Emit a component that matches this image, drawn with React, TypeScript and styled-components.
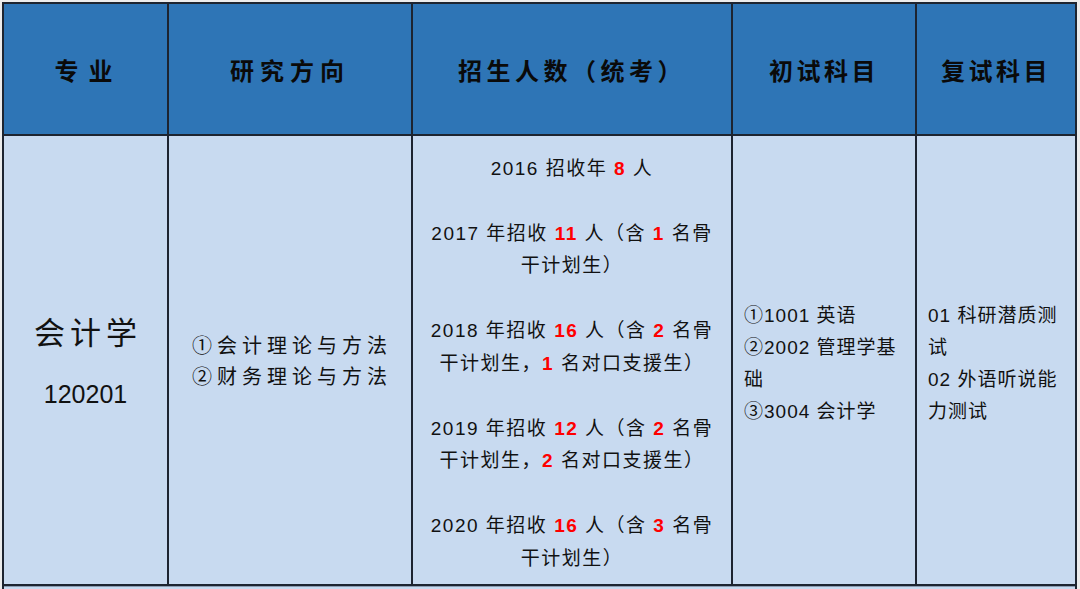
import React from "react";
import styled, { createGlobalStyle } from "styled-components";

const GlobalStyle = createGlobalStyle`
  html, body {
    margin: 0;
    padding: 0;
    background: #ececec;
  }
  body {
    font-family: "Liberation Sans", "Noto Sans CJK SC", sans-serif;
    color: #111;
  }
`;

const Page = styled.div`
  width: 1080px;
  height: 589px;
  overflow: hidden;
  padding: 2px 0 0 2px;
  box-sizing: border-box;
`;

const Sheet = styled.div`
  display: grid;
  grid-template-columns: 163px 242px 318px 182px 158px;
  grid-template-rows: 130px 448px 40px;
  gap: 2px;
  padding: 2px;
  width: max-content;
  background: #1d2430;
`;

const HeadCell = styled.div<{ $spacing?: number; $shift?: number }>`
  background: #2e75b6;
  display: flex;
  align-items: center;
  justify-content: center;
  padding-left: ${(p) => p.$shift ?? 0}px;
  font-family: "Noto Sans CJK SC", sans-serif;
  font-weight: 700;
  font-size: 24px;
  letter-spacing: ${(p) => p.$spacing ?? 3}px;
  color: #0a0a0a;
  white-space: nowrap;
`;

const Cell = styled.div<{ $align?: "center" | "left" }>`
  background: #c8daf0;
  display: flex;
  flex-direction: column;
  justify-content: center;
  align-items: ${(p) => (p.$align === "left" ? "flex-start" : "center")};
  padding: ${(p) => (p.$align === "left" ? "0 0 0 11px" : "0")};
  box-sizing: border-box;
`;

const MajorName = styled.div`
  font-family: "Noto Sans CJK SC", sans-serif;
  font-size: 31px;
  line-height: 40px;
  letter-spacing: 5px;
  padding-left: 5px;
`;

const MajorCode = styled.div`
  font-family: "Liberation Sans", sans-serif;
  font-size: 25px;
  line-height: 30px;
  margin-top: 28px;
`;

const Directions = styled.div`
  font-size: 20px;
  line-height: 31px;
  letter-spacing: 5px;
  white-space: nowrap;
  margin-top: 4px;
  padding-left: 4px;
`;

const QuotaList = styled.div`
  display: flex;
  flex-direction: column;
  align-items: center;
  gap: 32.5px;
  font-size: 19px;
  line-height: 32.5px;
  letter-spacing: 1.5px;
  margin-top: 8px;
`;

const Quota = styled.div`
  display: flex;
  flex-direction: column;
  align-items: center;
`;

const QLine = styled.div`
  white-space: pre;
`;

const Num = styled.span`
  color: #ff0000;
  font-weight: 700;
`;

const SubjectList = styled.div`
  font-size: 19px;
  line-height: 32px;
  letter-spacing: 1px;
  margin-top: 8px;
`;

const SubjectLine = styled.div`
  white-space: pre;
`;

const FootRow = styled.div`
  grid-column: 1 / -1;
  background: #c8daf0;
  box-shadow: inset 0 1px 0 #8a9bb0;
`;

type Seg = string | { n: string };

const quotas: Seg[][][] = [
  [["2016 招收年 ", { n: "8" }, " 人"]],
  [["2017 年招收 ", { n: "11" }, " 人（含 ", { n: "1" }, " 名骨"], ["干计划生）"]],
  [
    ["2018 年招收 ", { n: "16" }, " 人（含 ", { n: "2" }, " 名骨"],
    ["干计划生，", { n: "1" }, " 名对口支援生）"],
  ],
  [
    ["2019 年招收 ", { n: "12" }, " 人（含 ", { n: "2" }, " 名骨"],
    ["干计划生，", { n: "2" }, " 名对口支援生）"],
  ],
  [["2020 年招收 ", { n: "16" }, " 人（含 ", { n: "3" }, " 名骨"], ["干计划生）"]],
];

const firstExam = ["①1001 英语", "②2002 管理学基", "础", "③3004 会计学"];
const retest = ["01 科研潜质测", "试", "02 外语听说能", "力测试"];

export default function App() {
  return (
    <Page>
      <GlobalStyle />
      <Sheet>
        <HeadCell $spacing={10} $shift={6}>专业</HeadCell>
        <HeadCell $spacing={6}>研究方向</HeadCell>
        <HeadCell $spacing={4.5}>招生人数（统考）</HeadCell>
        <HeadCell $spacing={3.5}>初试科目</HeadCell>
        <HeadCell $spacing={3.5}>复试科目</HeadCell>

        <Cell>
          <MajorName>会计学</MajorName>
          <MajorCode>120201</MajorCode>
        </Cell>
        <Cell>
          <Directions>
            <div>①会计理论与方法</div>
            <div>②财务理论与方法</div>
          </Directions>
        </Cell>
        <Cell>
          <QuotaList>
            {quotas.map((q, i) => (
              <Quota key={i}>
                {q.map((line, j) => (
                  <QLine key={j}>
                    {line.map((s, k) =>
                      typeof s === "string" ? (
                        <React.Fragment key={k}>{s}</React.Fragment>
                      ) : (
                        <Num key={k}>{s.n}</Num>
                      )
                    )}
                  </QLine>
                ))}
              </Quota>
            ))}
          </QuotaList>
        </Cell>
        <Cell $align="left">
          <SubjectList>
            {firstExam.map((t) => (
              <SubjectLine key={t}>{t}</SubjectLine>
            ))}
          </SubjectList>
        </Cell>
        <Cell $align="left">
          <SubjectList>
            {retest.map((t) => (
              <SubjectLine key={t}>{t}</SubjectLine>
            ))}
          </SubjectList>
        </Cell>

        <FootRow />
      </Sheet>
    </Page>
  );
}
